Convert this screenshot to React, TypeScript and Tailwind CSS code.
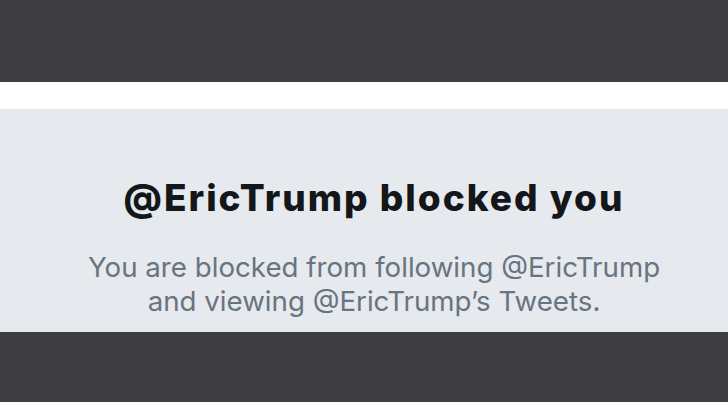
export default function App() {
  return (
    <div
      className="flex h-[402px] w-[728px] flex-col overflow-hidden bg-[#3e3e40]"
      style={{ fontFamily: "Inter, 'Noto Sans', sans-serif" }}
    >
      <div className="h-[82px] shrink-0 bg-[#3e3e40]" />
      <div className="h-[27px] shrink-0 bg-white" />
      <div className="flex h-[223px] shrink-0 flex-col items-center bg-[#e6e9ee] pl-[20px] pt-[67px] text-center">
        <h1 className="text-[37px] font-extrabold leading-[44px] tracking-[2px] text-[#14171a]">
          @EricTrump blocked you
        </h1>
        <p className="mt-[30px] text-[27.7px] leading-[34px] text-[#68747f]">
          You are blocked from following @EricTrump
          <br />
          and viewing @EricTrump’s Tweets.
        </p>
      </div>
      <div className="flex-1 bg-[#3e3e40]" />
    </div>
  );
}
